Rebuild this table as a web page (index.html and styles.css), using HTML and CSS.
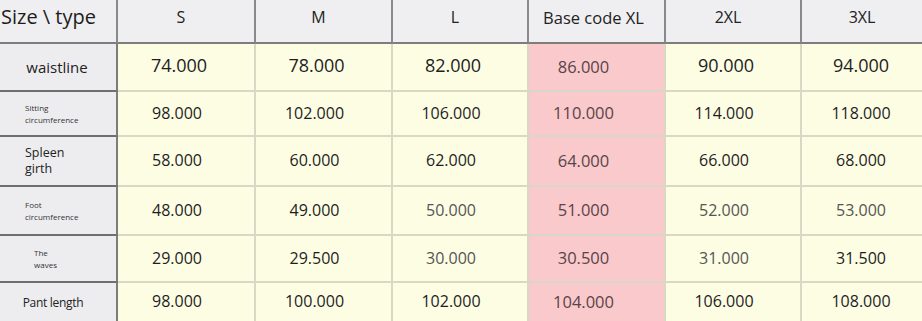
FILE: index.html
```html
<!DOCTYPE html>
<html>
<head>
<meta charset="utf-8">
<link rel="stylesheet" href="styles.css">
</head>
<body>
<div class="table">
  <div class="cell hd corner">Size \ type</div>
  <div class="cell hd">S</div>
  <div class="cell hd">M</div>
  <div class="cell hd">L</div>
  <div class="cell hd hd-xl">Base code XL</div>
  <div class="cell hd">2XL</div>
  <div class="cell hd last">3XL</div>

  <div class="cell lab lab-big">waistline</div>
  <div class="cell v big">74.000</div>
  <div class="cell v big">78.000</div>
  <div class="cell v big">82.000</div>
  <div class="cell v xl">86.000</div>
  <div class="cell v big">90.000</div>
  <div class="cell v big last">94.000</div>

  <div class="cell lab lab-tiny">Sitting<br>circumference</div>
  <div class="cell v">98.000</div>
  <div class="cell v">102.000</div>
  <div class="cell v">106.000</div>
  <div class="cell v xl">110.000</div>
  <div class="cell v">114.000</div>
  <div class="cell v last">118.000</div>

  <div class="cell lab lab-mid">Spleen<br>girth</div>
  <div class="cell v">58.000</div>
  <div class="cell v">60.000</div>
  <div class="cell v">62.000</div>
  <div class="cell v xl">64.000</div>
  <div class="cell v">66.000</div>
  <div class="cell v last">68.000</div>

  <div class="cell lab lab-tiny">Foot<br>circumference</div>
  <div class="cell v">48.000</div>
  <div class="cell v">49.000</div>
  <div class="cell v grey">50.000</div>
  <div class="cell v xl">51.000</div>
  <div class="cell v grey">52.000</div>
  <div class="cell v grey last">53.000</div>

  <div class="cell lab lab-tiny indent">The<br>waves</div>
  <div class="cell v">29.000</div>
  <div class="cell v">29.500</div>
  <div class="cell v grey">30.000</div>
  <div class="cell v xl">30.500</div>
  <div class="cell v grey">31.000</div>
  <div class="cell v last">31.500</div>

  <div class="cell lab lab-pant bottom">Pant length</div>
  <div class="cell v bottom">98.000</div>
  <div class="cell v bottom">100.000</div>
  <div class="cell v bottom">102.000</div>
  <div class="cell v xl bottom">104.000</div>
  <div class="cell v bottom">106.000</div>
  <div class="cell v bottom last">108.000</div>
</div>
</body>
</html>
```

FILE: styles.css
```css
html, body {
  margin: 0;
  padding: 0;
  background: #fdfde6;
}
body {
  width: 922px;
  height: 321px;
  overflow: hidden;
  font-family: "Open Sans", "Noto Sans", sans-serif;
  color: #222;
}
.table {
  display: grid;
  grid-template-columns: 118px 138px 137px 136px 137px 136px 1fr;
  grid-template-rows: 44px 48px 45px 50px 49px 47px 38px;
  width: 922px;
}
.cell {
  box-sizing: border-box;
  border-right: 2px solid #d9d8c4;
  border-bottom: 2px solid #d9d8c4;
  display: flex;
  align-items: center;
  justify-content: center;
  background: #fdfde4;
}
.cell.last { border-right: none; }
.cell.bottom { border-bottom: none; }
.hd {
  background: #efeff1;
  border-right-color: #8a8a8a;
  border-bottom-color: #7d7d7d;
  font-size: 16px;
  color: #222;
  padding-bottom: 8px;
  padding-right: 10px;
}
.hd-xl { font-size: 16.5px; padding-right: 6px; }
.hd.last { padding-right: 0; }
.corner {
  justify-content: flex-start;
  font-size: 20px;
  padding-left: 1px;
  padding-right: 0;
  padding-bottom: 10px;
  color: #1c1c1c;
}
.lab {
  background: #ededf0;
  border-right-color: #7d7d7d;
  border-bottom-color: #6f6f6f;
  color: #222;
}
.lab-big { font-size: 15px; padding-right: 2px; }
.lab-tiny {
  justify-content: flex-start;
  padding-left: 25px;
  font-size: 8px;
  line-height: 12px;
  color: #333;
}
.lab-tiny.indent { padding-left: 34px; }
.lab-mid {
  justify-content: flex-start;
  padding-left: 25px;
  font-size: 12.5px;
  line-height: 16px;
}
.lab-pant { font-size: 12px; letter-spacing: -0.3px; padding-right: 10px; }
.v {
  font-size: 16px;
  color: #1e1e1e;
  padding-right: 18px;
  padding-bottom: 2px;
}
.v.big { font-size: 18px; padding-right: 14px; padding-bottom: 4px; }
.v.last { padding-right: 2px; }
.v.grey { color: #555; }
.xl {
  background: #f9c9cc;
  color: #5a4448;
  font-size: 16.5px;
  padding-right: 26px;
}
```
